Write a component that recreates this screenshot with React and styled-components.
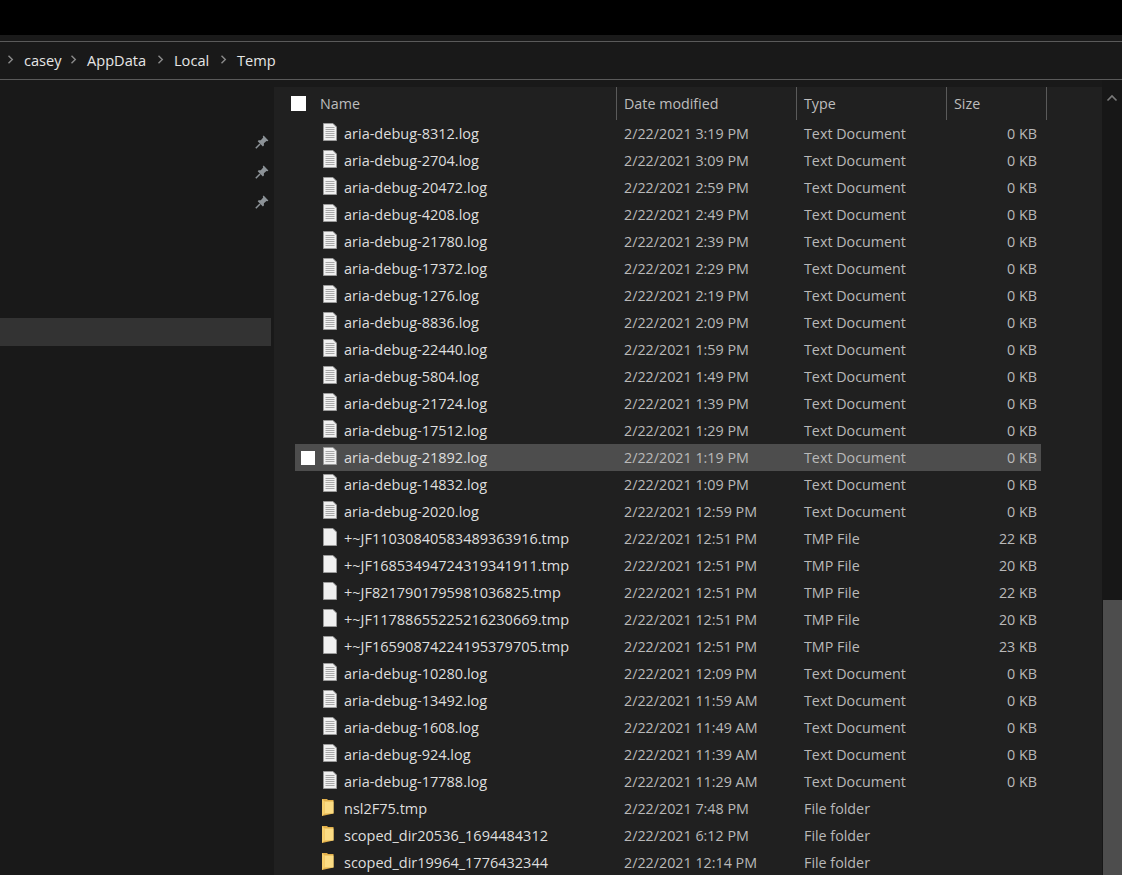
import styled, { createGlobalStyle } from "styled-components";

const GlobalStyle = createGlobalStyle`
  html, body {
    margin: 0;
    padding: 0;
    background: #191919;
  }
  * {
    box-sizing: border-box;
  }
`;

const files = [
  ["aria-debug-8312.log", "2/22/2021 3:19 PM", "Text Document", "0 KB", "log"],
  ["aria-debug-2704.log", "2/22/2021 3:09 PM", "Text Document", "0 KB", "log"],
  ["aria-debug-20472.log", "2/22/2021 2:59 PM", "Text Document", "0 KB", "log"],
  ["aria-debug-4208.log", "2/22/2021 2:49 PM", "Text Document", "0 KB", "log"],
  ["aria-debug-21780.log", "2/22/2021 2:39 PM", "Text Document", "0 KB", "log"],
  ["aria-debug-17372.log", "2/22/2021 2:29 PM", "Text Document", "0 KB", "log"],
  ["aria-debug-1276.log", "2/22/2021 2:19 PM", "Text Document", "0 KB", "log"],
  ["aria-debug-8836.log", "2/22/2021 2:09 PM", "Text Document", "0 KB", "log"],
  ["aria-debug-22440.log", "2/22/2021 1:59 PM", "Text Document", "0 KB", "log"],
  ["aria-debug-5804.log", "2/22/2021 1:49 PM", "Text Document", "0 KB", "log"],
  ["aria-debug-21724.log", "2/22/2021 1:39 PM", "Text Document", "0 KB", "log"],
  ["aria-debug-17512.log", "2/22/2021 1:29 PM", "Text Document", "0 KB", "log"],
  ["aria-debug-21892.log", "2/22/2021 1:19 PM", "Text Document", "0 KB", "log", true],
  ["aria-debug-14832.log", "2/22/2021 1:09 PM", "Text Document", "0 KB", "log"],
  ["aria-debug-2020.log", "2/22/2021 12:59 PM", "Text Document", "0 KB", "log"],
  ["+~JF11030840583489363916.tmp", "2/22/2021 12:51 PM", "TMP File", "22 KB", "tmp"],
  ["+~JF16853494724319341911.tmp", "2/22/2021 12:51 PM", "TMP File", "20 KB", "tmp"],
  ["+~JF8217901795981036825.tmp", "2/22/2021 12:51 PM", "TMP File", "22 KB", "tmp"],
  ["+~JF11788655225216230669.tmp", "2/22/2021 12:51 PM", "TMP File", "20 KB", "tmp"],
  ["+~JF16590874224195379705.tmp", "2/22/2021 12:51 PM", "TMP File", "23 KB", "tmp"],
  ["aria-debug-10280.log", "2/22/2021 12:09 PM", "Text Document", "0 KB", "log"],
  ["aria-debug-13492.log", "2/22/2021 11:59 AM", "Text Document", "0 KB", "log"],
  ["aria-debug-1608.log", "2/22/2021 11:49 AM", "Text Document", "0 KB", "log"],
  ["aria-debug-924.log", "2/22/2021 11:39 AM", "Text Document", "0 KB", "log"],
  ["aria-debug-17788.log", "2/22/2021 11:29 AM", "Text Document", "0 KB", "log"],
  ["nsl2F75.tmp", "2/22/2021 7:48 PM", "File folder", "", "folder"],
  ["scoped_dir20536_1694484312", "2/22/2021 6:12 PM", "File folder", "", "folder"],
  ["scoped_dir19964_1776432344", "2/22/2021 12:14 PM", "File folder", "", "folder"],
];

const Page = styled.div`
  width: 1122px;
  height: 875px;
  overflow: hidden;
  background: #191919;
  font-family: "Open Sans", "Noto Sans", sans-serif;
  font-size: 14.3px;
  display: flex;
  flex-direction: column;
`;

const TitleBar = styled.div`
  height: 35px;
  flex: none;
  background: #000;
`;

const Ribbon = styled.div`
  height: 6px;
  flex: none;
  background: #1a1a1a;
`;

const AddressBar = styled.div`
  height: 39px;
  flex: none;
  display: flex;
  align-items: center;
  padding-left: 7px;
  background: #191919;
  border-top: 1px solid #5a5a5a;
  border-bottom: 1px solid #5a5a5a;
  color: #e6e6e6;
  font-size: 14.6px;
`;

const Crumb = styled.span`
  width: ${(p) => p.$width}px;
  margin-bottom: 2px;
  flex: none;
`;

const CrumbArrow = styled.svg`
  width: 7px;
  height: 9px;
  margin: 0 10px 2px 0;
  flex: none;
`;

const Body = styled.div`
  flex: 1;
  min-height: 0;
  display: flex;
`;

const NavPane = styled.div`
  width: 274px;
  flex: none;
  padding-top: 47px;
  display: flex;
  flex-direction: column;
`;

const PinRow = styled.div`
  height: 30px;
  display: flex;
  align-items: center;
  justify-content: flex-end;
  padding-right: 5px;
`;

const NavSelected = styled.div`
  width: 271px;
  height: 28px;
  margin-top: 101px;
  background: #333;
`;

const ListPane = styled.div`
  flex: 1;
  min-width: 0;
  padding-top: 7px;
  display: flex;
`;

const List = styled.div`
  width: 828px;
  flex: none;
  background: #202020;
  overflow: hidden;
`;

const Header = styled.div`
  height: 33px;
  display: grid;
  grid-template-columns: 343px 180px 150px 100px;
  color: #bdbdbd;
`;

const HeaderCell = styled.div`
  height: 33px;
  display: flex;
  align-items: center;
  padding-left: ${(p) => (p.$first ? "17px" : "7px")};
  border-right: 1px solid #5a5a5a;
`;

const HeaderBox = styled.span`
  width: 15px;
  height: 15px;
  margin-right: 14px;
  background: #fff;
`;

const Row = styled.div`
  width: 746px;
  height: 27px;
  margin-left: 21px;
  display: grid;
  grid-template-columns: 26px 23px 273px 180px 150px 94px;
  align-items: center;
  background: ${(p) => (p.$hover ? "#4d4d4d" : "transparent")};
  color: #b9b9b9;
`;

const RowBox = styled.span`
  width: 14px;
  height: 14px;
  margin-left: 6px;
  background: ${(p) => (p.$show ? "#fff" : "transparent")};
`;

const FileIcon = styled.svg`
  width: 16px;
  height: 18px;
  margin: 0 0 3px 1px;
  display: block;
`;

const FileName = styled.span`
  color: #dedede;
  white-space: nowrap;
  font-size: 14.5px;
`;

const Cell = styled.span`
  padding-left: 7px;
  white-space: nowrap;
`;

const SizeCell = styled.span`
  text-align: right;
  padding-right: 4px;
`;

const ScrollBar = styled.div`
  flex: 1;
  margin-top: -7px;
  background: #171717;
  display: flex;
  flex-direction: column;
  align-items: center;
  padding-top: 14px;
`;

const ScrollArrow = styled.svg`
  width: 12px;
  height: 8px;
  flex: none;
`;

const ScrollThumb = styled.div`
  width: 19px;
  height: 275px;
  margin: 498px 0 0 1px;
  background: #4d4d4d;
  flex: none;
`;

const Chevron = () => (
  <CrumbArrow viewBox="0 0 7 9">
    <path d="M1.5 .8 L5.3 4.5 L1.5 8.2" fill="none" stroke="#8a8a8a" strokeWidth="1.4" />
  </CrumbArrow>
);

const Pin = () => (
  <svg width="14" height="14" viewBox="0 0 14 14">
    <path
      d="M8.6 .6 L13.4 5.4 L12.4 6.2 L11.5 5.9 L8.9 8.3 L8.9 10.6 L7.9 11.4 L2.7 6.2 L3.6 5.2 L5.8 5.2 L8.2 2.6 L7.8 1.5 Z"
      fill="#8c9297"
    />
    <path d="M5 9 L.8 13.2" stroke="#8c9297" strokeWidth="1.5" />
  </svg>
);

const KindIcon = ({ kind }) => {
  if (kind === "folder") {
    return (
      <FileIcon viewBox="0 0 16 18">
        <path d="M0 1 H5 L6 2 H11.5 V15.5 L0 18 Z" fill="#e2b04a" />
        <path d="M2.5 3.5 H11.5 V15.5 H2.5 Z" fill="#fbdc84" />
        <path d="M0 1 L2.5 3.5 V15.5 L0 18 Z" fill="#f7cf6d" />
      </FileIcon>
    );
  }
  return (
    <FileIcon viewBox="0 0 16 18">
      <path d="M1.5 .5 H11 L14.5 4 V17.5 H1.5 Z" fill="#f0f0f0" stroke="#9a9a9a" strokeWidth="1" />
      {kind === "log" &&
        [4.5, 6.5, 8.5, 10.5, 12.5, 14.5].map((y) => (
          <path key={y} d={`M3.5 ${y} H12.5`} stroke="#a8a8a8" strokeWidth="1" />
        ))}
    </FileIcon>
  );
};

export default function App() {
  return (
    <Page>
      <GlobalStyle />
      <TitleBar />
      <Ribbon />
      <AddressBar>
        <Chevron />
        <Crumb $width={46}>casey</Crumb>
        <Chevron />
        <Crumb $width={70}>AppData</Crumb>
        <Chevron />
        <Crumb $width={46}>Local</Crumb>
        <Chevron />
        <Crumb $width={40}>Temp</Crumb>
      </AddressBar>
      <Body>
        <NavPane>
          <PinRow>
            <Pin />
          </PinRow>
          <PinRow>
            <Pin />
          </PinRow>
          <PinRow>
            <Pin />
          </PinRow>
          <NavSelected />
        </NavPane>
        <ListPane>
          <List>
            <Header>
              <HeaderCell $first>
                <HeaderBox />
                Name
              </HeaderCell>
              <HeaderCell>Date modified</HeaderCell>
              <HeaderCell>Type</HeaderCell>
              <HeaderCell>Size</HeaderCell>
            </Header>
            {files.map(([name, date, type, size, kind, hover]) => (
              <Row key={name} $hover={hover}>
                <RowBox $show={hover} />
                <KindIcon kind={kind} />
                <FileName>{name}</FileName>
                <Cell>{date}</Cell>
                <Cell>{type}</Cell>
                <SizeCell>{size}</SizeCell>
              </Row>
            ))}
          </List>
          <ScrollBar>
            <ScrollArrow viewBox="0 0 12 8">
              <path d="M1.5 6.5 L6 2 L10.5 6.5" fill="none" stroke="#7a7a7a" strokeWidth="1.6" />
            </ScrollArrow>
            <ScrollThumb />
          </ScrollBar>
        </ListPane>
      </Body>
    </Page>
  );
}
